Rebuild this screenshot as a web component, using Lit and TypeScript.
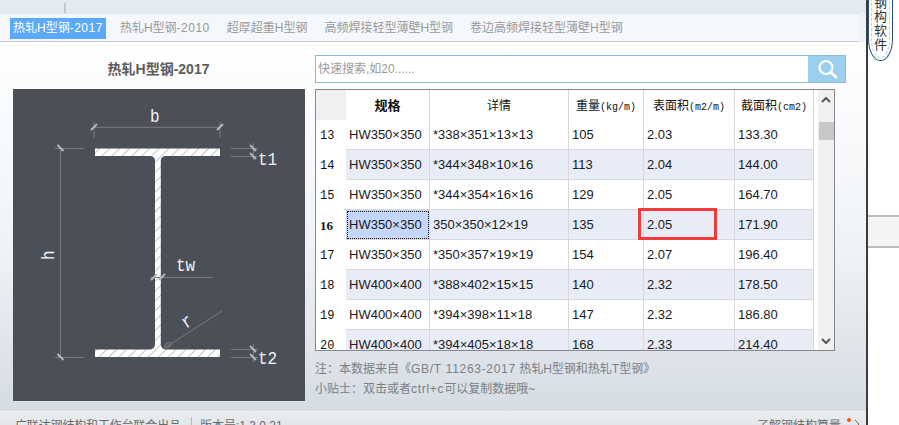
import { LitElement, html, css, svg } from "lit";
import { customElement } from "lit/decorators.js";

const ROWS = [
  ["13", "HW350×350", "*338×351×13×13", "105", "2.03", "133.30"],
  ["14", "HW350×350", "*344×348×10×16", "113", "2.04", "144.00"],
  ["15", "HW350×350", "*344×354×16×16", "129", "2.05", "164.70"],
  ["16", "HW350×350", "350×350×12×19", "135", "2.05", "171.90"],
  ["17", "HW350×350", "*350×357×19×19", "154", "2.07", "196.40"],
  ["18", "HW400×400", "*388×402×15×15", "140", "2.32", "178.50"],
  ["19", "HW400×400", "*394×398×11×18", "147", "2.32", "186.80"],
  ["20", "HW400×400", "*394×405×18×18", "168", "2.33", "214.40"],
];
const TABS: [string, string][] = [
  ["热轧H型钢", "-2017"],
  ["热轧H型钢", "-2010"],
  ["超厚超重H型钢", ""],
  ["高频焊接轻型薄壁H型钢", ""],
  ["卷边高频焊接轻型薄壁H型钢", ""],
];

const tick = (x: number, y: number) => svg`<line x1=${x - 3} y1=${y + 3} x2=${x + 3} y2=${y - 3} class="tick"/>`;
const btick = (x: number, y: number) => svg`<line x1=${x - 3} y1=${y - 3} x2=${x + 3} y2=${y + 3} class="tick"/>`;

const diagram = svg`
<svg class="dia" viewBox="13 89 292 312" width="292" height="312">
  <defs>
    <pattern id="hatch" width="7" height="7" patternUnits="userSpaceOnUse" patternTransform="rotate(45)">
      <rect width="7" height="7" fill="#fff"/>
      <line x1="0" y1="0" x2="0" y2="7" stroke="#a9abaf" stroke-width="1.4"/>
    </pattern>
  </defs>
  <path fill="url(#hatch)" d="M95 148.5H220V156H165Q161.5 156.500 160.800 160V345Q161.500 348.500 165 349.500H220V357H95V349.500H150.500Q154.500 348.500 155 345V160Q154.500 156.500 150.500 156H95Z"/>
  <g class="thin">
    <line x1="94" y1="127.300" x2="220" y2="127.300"/>
    <line x1="94" y1="122" x2="94" y2="138"/>
    <line x1="220" y1="122" x2="220" y2="138"/>
    <line x1="60.500" y1="148" x2="60.500" y2="357"/>
    <line x1="55" y1="148.500" x2="84" y2="148.500"/>
    <line x1="55" y1="357.500" x2="84" y2="357.500"/>
    <line x1="231" y1="148.500" x2="258" y2="148.500"/>
    <line x1="231" y1="156.500" x2="258" y2="156.500"/>
    <line x1="253.500" y1="143" x2="253.500" y2="160"/>
    <line x1="231" y1="349.500" x2="258" y2="349.500"/>
    <line x1="231" y1="357.500" x2="258" y2="357.500"/>
    <line x1="253.500" y1="344" x2="253.500" y2="362"/>
    <line x1="150" y1="277.500" x2="213" y2="277.500"/>
    <line x1="163" y1="349" x2="222" y2="311"/>
    <ellipse cx="168" cy="345" rx="3.500" ry="1.800" transform="rotate(-33 168 345)"/>
  </g>
  ${tick(94, 127)}${tick(220, 127)}
  ${btick(60.5, 148)}${btick(60.5, 357)}
  ${btick(253, 148)}${btick(253, 156)}${btick(253, 349)}${btick(253, 357)}
  ${tick(154, 277)}${tick(162, 277)}
  <text class="lbl" transform="translate(150 122) scale(1 1.2)">b</text>
  <text class="lbl" transform="translate(258 165) scale(1 1.2)">t1</text>
  <text class="lbl" transform="translate(258 364) scale(1 1.2)">t2</text>
  <text class="lbl" transform="translate(176 271) scale(1 1.2)">tw</text>
  <text class="lbl" transform="translate(54 260) rotate(-90) scale(1 1.2)">h</text>
  <text class="lbl" transform="translate(186 329) rotate(-33) scale(1 1.2)">r</text>
</svg>`;

@customElement("app-root")
export class AppRoot extends LitElement {
  static styles = css`
    :host {
      display: flex;
      width: 899px;
      height: 425px;
      overflow: hidden;
      background: #fff;
      font-family: "Liberation Sans", "Noto Sans CJK SC", sans-serif;
      font-size: 12px;
    }
    .win {
      width: 866px;
      height: 425px;
      display: flex;
      flex-direction: column;
      flex: none;
      border-right: 2px solid #3a3e44;
    }
    .strip {
      height: 13px;
      flex: none;
      background: #e3eaf2;
      padding: 3px 0 0 64px;
      box-sizing: border-box;
    }
    .strip i {
      display: block;
      width: 2px;
      height: 10px;
      background: #c3cad2;
    }
    .tabsrow {
      flex: none;
      height: 29px;
      display: flex;
      background: #eef2f6;
    }
    .tabs {
      width: 859px;
      box-sizing: border-box;
      border-top: 1px solid #dfe5ec;
      border-bottom: 1px solid #c6cad2;
      background: #f4f7fb;
      padding: 4px 0 0 10px;
      display: flex;
      gap: 11px;
      align-items: flex-start;
    }
    .tab {
      height: 21px;
      line-height: 21px;
      padding: 0 3px;
      color: #9a9a9a;
      white-space: nowrap;
    }
    .tab span {
      letter-spacing: 0.5px;
    }
    .tab.on {
      background: #5aa9fb;
      color: #fff;
    }
    .main {
      flex: 1;
      min-height: 0;
      display: flex;
      background: linear-gradient(#ffffff, #f0f3f6 55%, #d5dce2);
      padding: 0 0 0 13px;
    }
    .left {
      width: 292px;
      flex: none;
      display: flex;
      flex-direction: column;
    }
    .title {
      height: 47px;
      box-sizing: border-box;
      padding: 17px 1px 0 0;
      line-height: 20px;
      text-align: center;
      font-size: 14px;
      font-weight: bold;
      color: #5c5c5c;
    }
    .panel {
      height: 312px;
      background: #4b4f58;
    }
    .dia {
      display: block;
    }
    .dia .thin line,
    .dia .thin ellipse {
      stroke: #767a81;
      stroke-width: 1;
      fill: none;
    }
    .dia .tick {
      stroke: #b4b6b9;
      stroke-width: 2;
    }
    .dia .lbl {
      font-family: "Liberation Mono", monospace;
      font-size: 16px;
      fill: #f2f2f2;
    }
    .right {
      width: 531px;
      margin-left: 10px;
      flex: none;
      padding-top: 13px;
      display: flex;
      flex-direction: column;
    }
    .search {
      display: flex;
      height: 28px;
      flex: none;
    }
    .input {
      width: 493px;
      box-sizing: border-box;
      background: #fff;
      border: 1px solid #8fbbda;
      border-right: none;
      color: #9a9a9a;
      padding-left: 2px;
      line-height: 26px;
      font-size: 12px;
    }
    .btn {
      width: 38px;
      background: #9ccfee;
      border: 1px solid #8fbbda;
      border-left: none;
      box-sizing: border-box;
      display: flex;
      align-items: center;
      justify-content: center;
    }
    .grid {
      position: relative;
      margin-top: 6px;
      width: 520px;
      height: 262px;
      box-sizing: border-box;
      border: 1px solid #85878f;
      background: #fff;
      display: flex;
      overflow: hidden;
      flex: none;
    }
    .tw {
      width: 502px;
      flex: none;
      overflow: hidden;
    }
    table {
      border-collapse: separate;
      border-spacing: 0;
      table-layout: fixed;
      width: 498px;
    }
    td, th {
      height: 30px;
      box-sizing: border-box;
      padding: 0 0 0 3px;
      border-right: 1px solid #d8d8dc;
      border-bottom: 1px solid #d8d8dc;
      text-align: left;
      font-size: 13px;
      font-weight: normal;
      color: #1a1a1a;
      white-space: nowrap;
      overflow: hidden;
    }
    th {
      text-align: center;
      padding: 0 0 2px;
      border-bottom: none;
      color: #111;
      font-size: 12px;
    }
    th small {
      font-family: "Liberation Mono", monospace;
      font-size: 10px;
    }
    th.b {
      font-weight: bold;
      font-size: 13px;
    }
    th.corner {
      background: #f0f0f0;
      border-right: none;
    }
    td.n {
      border: none;
      padding: 2px 0 0 4px;
      font-family: "Liberation Mono", monospace;
      font-size: 12px;
      color: #111;
      background: #fff;
    }
    td.n.cur {
      font-family: "Liberation Serif", serif;
      font-size: 13px;
      font-weight: bold;
    }
    tr.alt td:not(.n) {
      background: #e8ecf7;
    }
    td.sel {
      background: #c4d7fb !important;
      outline: 1px dotted #111;
      outline-offset: -2px;
    }
    .sb {
      width: 16px;
      flex: none;
      background: #f0f0f0;
      position: relative;
      display: flex;
      flex-direction: column;
      align-items: center;
    }
    .sb svg {
      display: block;
      flex: none;
    }
    .thumb {
      width: 15px;
      height: 18px;
      background: #c8c8c8;
      margin-top: 19px;
      flex: none;
    }
    .sb .dn {
      margin-top: auto;
      margin-bottom: 6px;
    }
    .sb .up {
      margin-top: 7px;
    }
    .mark {
      position: absolute;
      left: 322px;
      top: 118px;
      width: 79px;
      height: 32px;
      box-sizing: border-box;
      border: 3px solid #f43a3a;
    }
    .notes {
      margin-top: 8px;
      color: #7b8087;
      font-size: 12px;
      line-height: 20px;
    }
    .notes span {
      letter-spacing: 0.7px;
    }
    .foot {
      height: 14px;
      flex: none;
      box-sizing: border-box;
      border-top: 1px solid #eef1f3;
      background: linear-gradient(#e9ecef, #e4e7ea);
      padding: 7px 0 0 15px;
      display: flex;
      color: #6b6b6b;
      line-height: 14px;
      font-size: 12px;
      overflow: hidden;
      white-space: nowrap;
    }
    .foot .org {
      letter-spacing: -0.15px;
    }
    .foot .sep {
      width: 1px;
      height: 12px;
      background: #b5b8bc;
      margin: -2px 8px 0 10px;
    }
    .foot .end {
      margin-left: auto;
      display: flex;
      align-items: flex-start;
      padding-right: 6px;
      position: relative;
    }
    .foot .dot {
      width: 4px;
      height: 4px;
      border-radius: 50%;
      background: #f9500f;
      margin: -1px 0 0 6px;
    }
    .foot svg {
      margin: 0 0 0 3px;
      flex: none;
    }
    .side {
      flex: 1;
      display: flex;
      flex-direction: column;
      min-width: 0;
    }
    .pill {
      width: 25px;
      height: 61px;
      flex: none;
      box-sizing: border-box;
      border: 1px solid #2c4f6e;
      border-top: none;
      border-radius: 0 0 12px 12px / 0 0 22px 22px;
      padding: 0 2px 2px;
      background: #fff;
    }
    .pill div {
      height: 100%;
      box-sizing: border-box;
      border: 1px dashed #a9d0ee;
      border-top: none;
      border-radius: 0 0 10px 10px / 0 0 20px 20px;
      display: flex;
      flex-direction: column;
      align-items: center;
      justify-content: flex-end;
      padding-bottom: 5px;
      color: #333;
      font-size: 13px;
      line-height: 14px;
    }
    .band {
      margin-top: 154px;
      height: 33px;
      flex: none;
      box-sizing: border-box;
      border-top: 2px solid #bcbcbc;
      border-bottom: 2px solid #bcbcbc;
      background: #f4f4f4;
    }
  `;

  render() {
    return html`
      <div class="win">
        <div class="strip"><i></i></div>
        <div class="tabsrow">
          <div class="tabs">
            ${TABS.map((t, i) => html`<div class="tab ${i === 0 ? "on" : ""}">${t[0]}<span>${t[1]}</span></div>`)}
          </div>
        </div>
        <div class="main">
          <div class="left">
            <div class="title">热轧H型钢-2017</div>
            <div class="panel">${diagram}</div>
          </div>
          <div class="right">
            <div class="search">
              <div class="input">快速搜索,如20......</div>
              <div class="btn">
                <svg width="22" height="22" viewBox="0 0 22 22" fill="none" stroke="#fff">
                  <circle cx="10" cy="9.500" r="6.500" stroke-width="2.200"/>
                  <line x1="15" y1="14.500" x2="20" y2="19" stroke-width="3" stroke-linecap="round"/>
                </svg>
              </div>
            </div>
            <div class="grid">
              <div class="tw">
                <table>
                  <colgroup>
                    <col style="width:30px" /><col style="width:84px" /><col style="width:139px" />
                    <col style="width:75px" /><col style="width:91px" /><col style="width:79px" />
                  </colgroup>
                  <tr>
                    <th class="corner"></th>
                    <th class="b">规格</th>
                    <th>详情</th>
                    <th>重量<small>(kg/m)</small></th>
                    <th>表面积<small>(m2/m)</small></th>
                    <th>截面积<small>(cm2)</small></th>
                  </tr>
                  ${ROWS.map(
                    (r, i) => html`
                      <tr class=${i % 2 ? "alt" : ""}>
                        <td class="n ${r[0] === "16" ? "cur" : ""}">${r[0]}</td>
                        <td class=${r[0] === "16" ? "sel" : ""}>${r[1]}</td>
                        <td>${r[2]}</td>
                        <td>${r[3]}</td>
                        <td>${r[4]}</td>
                        <td>${r[5]}</td>
                      </tr>
                    `
                  )}
                </table>
              </div>
              <div class="sb">
                <svg class="up" width="10" height="6" viewBox="0 0 10 6" fill="none" stroke="#555" stroke-width="2"><path d="M1 5l4-4 4 4"/></svg>
                <div class="thumb"></div>
                <svg class="dn" width="10" height="6" viewBox="0 0 10 6" fill="none" stroke="#555" stroke-width="2"><path d="M1 1l4 4 4-4"/></svg>
              </div>
              <div class="mark"></div>
            </div>
            <div class="notes">
              <div>注${"\uFF1A"}本数据来自《<span>GB/T 11263-2017</span> 热轧H型钢和热轧T型钢》</div>
              <div>小贴士${"\uFF1A"}双击或者<span>ctrl+c</span>可以复制数据哦~</div>
            </div>
          </div>
        </div>
        <div class="foot">
          <span class="org">广联达钢结构和工作台联合出品</span><i class="sep"></i><span>版本号:1.3.0.21</span>
          <div class="end">
            <span>了解钢结构算量</span><i class="dot"></i>
            <svg width="6" height="10" viewBox="0 0 6 10" fill="none" stroke="#666"><path d="M1 1l4 4-4 4"/></svg>
          </div>
        </div>
      </div>
      <div class="side">
        <div class="pill"><div><span>钢</span><span>构</span><span>软</span><span>件</span></div></div>
        <div class="band"></div>
      </div>
    `;
  }
}
